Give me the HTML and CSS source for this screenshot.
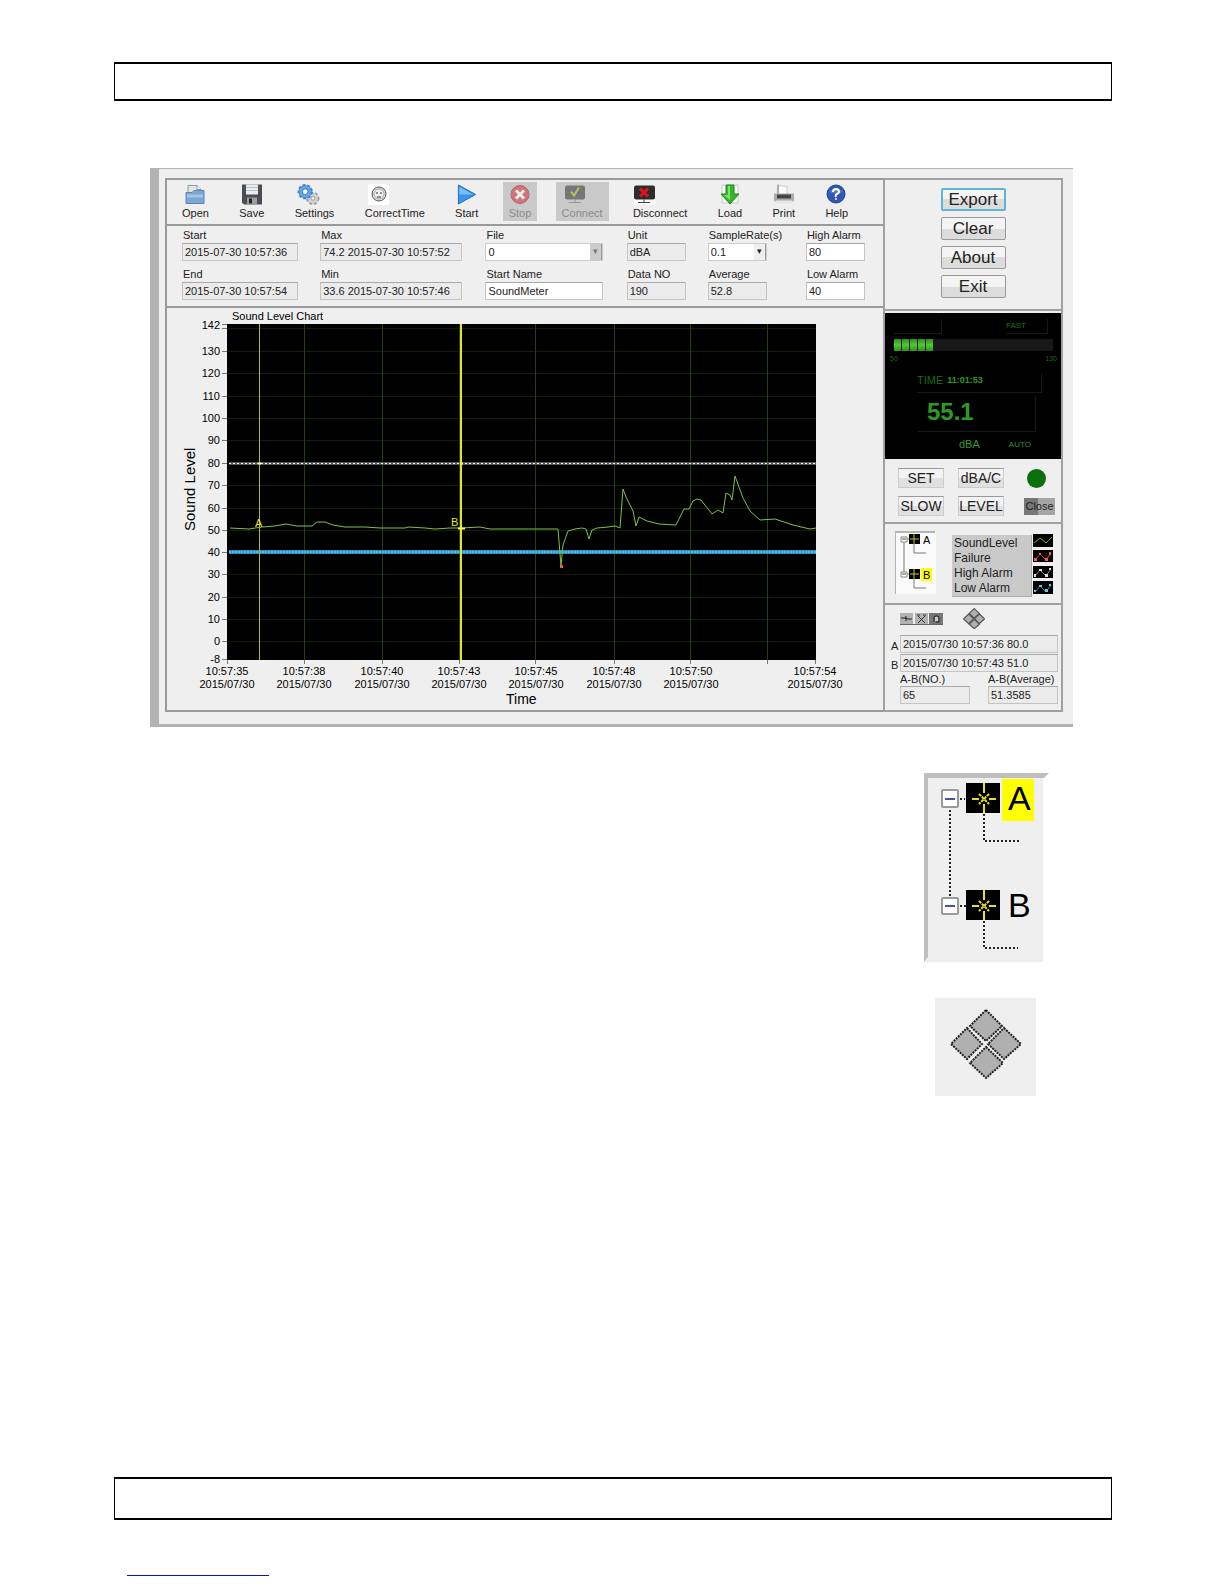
FILE: index.html
```
<!DOCTYPE html>
<html lang="en">
<head>
    <meta charset="UTF-8">
    <title>Sound Level Meter</title>
    <link rel="stylesheet" href="styles.css">
</head>
<body>

    <header class="page-bar"></header>

    <main>
        <section class="app">
            <div class="left">
                <nav class="panel toolbar">
                    <button type="button" class="tool">
                        <svg width="20" height="20" viewBox="0 0 20 20"><path d="M3 1h9l4 4v9H3z" fill="#dfe6ea" stroke="#8b9aa3"/><path d="M12 1v4h4" fill="#fff" stroke="#8b9aa3"/><path d="M1 8h6l2-2h10v13H1z" fill="#7ba7d6" stroke="#5f86b0"/><path d="M2 10h16v3H2z" fill="#a5c5e6"/></svg>
                        Open
                    </button>
                    <button type="button" class="tool">
                        <svg width="20" height="20" viewBox="0 0 20 20"><path d="M0 0h20v20H2l-2-2z" fill="#4a4d52"/><path d="M4 0h12v10H4z" fill="#e8ecef"/><path d="M4 3h12M4 6h12" stroke="#b8bec4"/><path d="M5 13h10v7H5z" fill="#9a9da2"/><path d="M7 14h3v5H7z" fill="#222"/></svg>
                        Save
                    </button>
                    <button type="button" class="tool tool-settings">
                        <svg width="24" height="22" viewBox="0 0 24 22"><circle cx="16" cy="15" r="6" fill="#c9ccce" stroke="#9b9ea0" stroke-width="2" stroke-dasharray="3 2"/><circle cx="16" cy="15" r="5" fill="#d0d2d3"/><circle cx="16" cy="15" r="2" fill="#efefef" stroke="#999"/><circle cx="8" cy="8" r="7" fill="#4b93da" stroke="#3d7fc4" stroke-width="2" stroke-dasharray="3 2"/><circle cx="8" cy="8" r="6" fill="#62a8ea"/><circle cx="8" cy="8" r="3" fill="#fff" stroke="#2d6db5"/></svg>
                        Settings
                    </button>
                    <button type="button" class="tool tool-time">
                        <svg width="21" height="21" viewBox="0 0 21 21"><path d="M0 0h21v21H0z" fill="#fff"/><circle cx="11" cy="10" r="7" fill="#ddd" stroke="#555"/><circle cx="11" cy="10" r="5" fill="#eee" stroke="#aaa"/><path d="M8 9h2M12 9h2M9 13h4" stroke="#333"/></svg>
                        CorrectTime
                    </button>
                    <button type="button" class="tool">
                        <svg width="20" height="22" viewBox="0 0 20 22"><path d="M1 1l18 10L1 21z" fill="#3b96f3" stroke="#2565b5"/><path d="M2 3l14 8H2z" fill="#79bdf9"/></svg>
                        Start
                    </button>
                    <button type="button" class="tool" disabled>
                        <svg width="20" height="20" viewBox="0 0 20 20"><circle cx="10" cy="10" r="9" fill="#cf7478" stroke="#b9666b"/><path d="M6 6l8 8M14 6l-8 8" stroke="#eee" stroke-width="3"/></svg>
                        Stop
                    </button>
                    <button type="button" class="tool tool-connect" disabled>
                        <svg width="20" height="20" viewBox="0 0 20 20"><rect y="1" width="20" height="14" rx="2" fill="#777"/><path d="M6 7l3 4 5-8" fill="none" stroke="#b6c552" stroke-width="2"/><path d="M10 15v3M4 18h12" stroke="#999"/></svg>
                        Connect
                    </button>
                    <button type="button" class="tool tool-disconnect">
                        <svg width="22" height="20" viewBox="0 0 22 20"><path d="M1 13h21v7H1z" fill="#fafafa"/><rect x="1" y="1" width="21" height="14" rx="2" fill="#2d2d2d"/><path d="M7 4l8 8M15 4l-8 8" stroke="#e31319" stroke-width="3"/><path d="M11 15v3M5 18h12" stroke="#444"/></svg>
                        Disconnect
                    </button>
                    <button type="button" class="tool">
                        <svg width="20" height="21" viewBox="0 0 20 21"><path d="M2 1h16v18H2z" fill="#f7f7f7" stroke="#ccc"/><path d="M6 1h8v9h5l-9 10-9-10h5z" fill="#35b52e" stroke="#23851f"/><path d="M8 2h2v14l-6-5h4z" fill="#7ee070"/></svg>
                        Load
                    </button>
                    <button type="button" class="tool">
                        <svg width="20" height="20" viewBox="0 0 20 20"><path d="M4 1l9 1v8H4z" fill="#fafafa" stroke="#ccc"/><path d="M4 0v9" stroke="#777"/><rect y="9" width="20" height="8" rx="1" fill="#aaa"/><path d="M3 10h14v4H3z" fill="#444"/><path d="M1 16h18l-2 3H3z" fill="#e6e6e6"/></svg>
                        Print
                    </button>
                    <button type="button" class="tool">
                        <svg width="21" height="21" viewBox="0 0 21 21"><circle cx="10" cy="10" r="9" fill="#2f55b7" stroke="#213f92"/><path d="M3 8a8 7 0 0 1 14 0q-7 3-14 0" fill="#5478cf"/><path d="M7 8q0-3 3-3t3 3q0 1-2 2t-1 3" fill="none" stroke="#fff" stroke-width="2"/><circle cx="10" cy="15" r="1" fill="#fff"/></svg>
                        Help
                    </button>
                </nav>

                <form class="panel info">
                    <div class="field"><label for="start">Start</label><input id="start" class="w-date" value="2015-07-30 10:57:36" readonly></div>
                    <div class="field"><label for="max">Max</label><input id="max" class="w-peak" value="74.2 2015-07-30 10:57:52" readonly></div>
                    <div class="field">
                        <label for="file">File</label>
                        <span class="combo combo-off w-file"><select id="file"><option>0</option></select></span>
                    </div>
                    <div class="field"><label for="unit">Unit</label><input id="unit" class="w-num" value="dBA" readonly></div>
                    <div class="field">
                        <label for="rate">SampleRate(s)</label>
                        <span class="combo w-num"><select id="rate"><option>0.1</option></select></span>
                    </div>
                    <div class="field"><label for="high">High Alarm</label><input id="high" class="w-num" value="80"></div>

                    <div class="field"><label for="end">End</label><input id="end" class="w-date" value="2015-07-30 10:57:54" readonly></div>
                    <div class="field"><label for="min">Min</label><input id="min" class="w-peak" value="33.6 2015-07-30 10:57:46" readonly></div>
                    <div class="field"><label for="name">Start Name</label><input id="name" class="w-file" value="SoundMeter"></div>
                    <div class="field"><label for="count">Data NO</label><input id="count" class="w-num" value="190" readonly></div>
                    <div class="field"><label for="average">Average</label><input id="average" class="w-num" value="52.8" readonly></div>
                    <div class="field"><label for="low">Low Alarm</label><input id="low" class="w-num" value="40"></div>
                </form>

                <div class="panel chart">
                    <svg viewBox="167 307 716 403">
                        <text x="232" y="320">Sound Level Chart</text>
                        <rect x="227" y="324" width="589" height="336" fill="#000"/>

                        <!-- grid -->
                        <path class="grid-h" d="M227 328.5h589M227 351.5h589M227 373.5h589M227 396.5h589M227 418.5h589M227 440.5h589M227 485.5h589M227 508.5h589M227 530.5h589M227 574.5h589M227 597.5h589M227 619.5h589M227 641.5h589"/>
                        <path class="grid-v" d="M304.5 324v336M382.5 324v336M459.5 324v336M535.5 324v336M614.5 324v336M690.5 324v336M767.5 324v336"/>
                        <path class="ticks" d="M222 324.5h5M222 328.5h5M222 351.5h5M222 373.5h5M222 396.5h5M222 418.5h5M222 440.5h5M222 463.5h5M222 485.5h5M222 508.5h5M222 530.5h5M222 552.5h5M222 574.5h5M222 597.5h5M222 619.5h5M222 641.5h5M222 659.5h5M227.5 660v4M304.5 660v4M382.5 660v4M459.5 660v4M535.5 660v4M614.5 660v4M690.5 660v4M767.5 660v4M815.5 660v4"/>

                        <!-- alarms -->
                        <path d="M229 463.5h587" stroke="#55555c" stroke-width="3"/>
                        <path d="M229 463.5h587" stroke="#f0f0f8" stroke-dasharray="2 2"/>
                        <path d="M229 552h587" stroke="#2b8fc4" stroke-width="4"/>
                        <path d="M229 552h587" stroke="#5bb6e2" stroke-width="2" stroke-dasharray="2 1"/>

                        <!-- level -->
                        <polyline class="level" points="230,528 249,529 262,527 275,526 286,524 297,526 312,526 317,522 325,522 333,525 345,527 365,527 380,528 405,528 408,527 425,528 435,529 450,528 461,528 480,527 490,529 520,529 558,529 561,566 563,545 568,531 575,529 582,528 586,529 589,539 592,530 597,528 608,527 615,526 620,528 623,489 626,497 633,511 636,526 639,517 647,521 659,524 676,525 684,509 689,509 693,501 697,499 701,500 712,514 718,510 723,513 726,493 730,495 732,500 735,476 743,498 750,511 760,520 775,519 793,525 810,529 816,528"/>
                        <rect x="560" y="565" width="3" height="3" fill="#f05a50"/>

                        <!-- cursors -->
                        <path d="M259.5 324v336" stroke="#b5b82a"/>
                        <path d="M461 324v336" stroke="#e6e32e" stroke-width="2"/>
                        <path d="M258 463.5h3M460 463.5h3M458 528.5h7" stroke="#ffff30" stroke-width="2"/>
                        <text class="mark" x="255" y="527">A</text>
                        <text class="mark" x="451" y="526">B</text>

                        <g text-anchor="end">
                            <text x="220" y="329">142</text>
                            <text x="220" y="355">130</text>
                            <text x="220" y="377">120</text>
                            <text x="220" y="400">110</text>
                            <text x="220" y="422">100</text>
                            <text x="220" y="444">90</text>
                            <text x="220" y="467">80</text>
                            <text x="220" y="489">70</text>
                            <text x="220" y="512">60</text>
                            <text x="220" y="534">50</text>
                            <text x="220" y="556">40</text>
                            <text x="220" y="578">30</text>
                            <text x="220" y="601">20</text>
                            <text x="220" y="623">10</text>
                            <text x="220" y="645">0</text>
                            <text x="220" y="663">-8</text>
                        </g>
                        <g text-anchor="middle">
                            <text x="227" y="675">10:57:35</text><text x="227" y="688">2015/07/30</text>
                            <text x="304" y="675">10:57:38</text><text x="304" y="688">2015/07/30</text>
                            <text x="382" y="675">10:57:40</text><text x="382" y="688">2015/07/30</text>
                            <text x="459" y="675">10:57:43</text><text x="459" y="688">2015/07/30</text>
                            <text x="536" y="675">10:57:45</text><text x="536" y="688">2015/07/30</text>
                            <text x="614" y="675">10:57:48</text><text x="614" y="688">2015/07/30</text>
                            <text x="691" y="675">10:57:50</text><text x="691" y="688">2015/07/30</text>
                            <text x="815" y="675">10:57:54</text><text x="815" y="688">2015/07/30</text>
                        </g>
                        <text class="axis-x" x="506" y="704">Time</text>
                        <text class="axis-y" transform="translate(195 531) rotate(-90)">Sound Level</text>
                    </svg>
                </div>
            </div>

            <aside class="right">
                <div class="panel actions">
                    <button type="button" class="btn focus">Export</button>
                    <button type="button" class="btn">Clear</button>
                    <button type="button" class="btn">About</button>
                    <button type="button" class="btn">Exit</button>
                </div>

                <div class="panel meter">
                    <div class="lcd">
                        <div class="lcd-top"><span></span><span>FAST</span></div>
                        <div class="lcd-bar"><i></i><i></i><i></i><i></i><i></i></div>
                        <div class="lcd-scale"><span>50</span><span>130</span></div>
                        <div class="lcd-time"><span>TIME</span><b>11:01:53</b></div>
                        <div class="lcd-value">55.1</div>
                        <div class="lcd-unit"><span>dBA</span><small>AUTO</small></div>
                    </div>
                    <div class="keys">
                        <button type="button" class="key">SET</button>
                        <button type="button" class="key">dBA/C</button>
                        <span class="led"></span>
                        <button type="button" class="key">SLOW</button>
                        <button type="button" class="key">LEVEL</button>
                        <button type="button" class="close">Close</button>
                    </div>
                </div>

                <div class="panel legend">
                    <svg class="minitree" width="41" height="63" viewBox="0 0 41 63">
                        <path d="M0 0h41v63H0z" fill="#fafafa"/>
                        <path d="M0 63V1h40" fill="none" stroke="#b5b5b5" stroke-width="2"/>
                        <path d="M9 9v34M9 8h6M9 43h6" stroke="#777"/>
                        <path d="M6 6h6v5H6zM6 41h6v5H6z" fill="#fff" stroke="#888"/>
                        <path d="M7 8h4M7 43h4" stroke="#555"/>
                        <path d="M14 3h11v10H14zM14 38h11v10H14z"/>
                        <path d="M19 3v10M15 8h9M19 38v10M15 43h9" stroke="#c9c920"/>
                        <path d="M19 13v9h12M19 48v9h12" fill="none" stroke="#777"/>
                        <path d="M26 37h11v13H26z" fill="#ff0"/>
                        <text x="28" y="13">A</text>
                        <text x="28" y="48">B</text>
                    </svg>
                    <ul class="names">
                        <li>SoundLevel</li>
                        <li>Failure</li>
                        <li>High Alarm</li>
                        <li>Low Alarm</li>
                    </ul>
                    <svg class="swatches" width="20" height="60" viewBox="0 0 20 60" fill="none">
                        <path d="M0 0h20v13H0zM0 16h20v12H0zM0 32h20v12H0zM0 47h20v13H0z" fill="#000"/>
                        <path d="M1 9l6-5 6 5 6-6" stroke="#6cb52f"/>
                        <path d="M2 26l5-6 6 6 5-7" stroke="#e33"/>
                        <path d="M1 24h3v3H1zM6 19h2v2H6zM12 24h3v3h-3zM16 18h2v3h-2z" fill="#f55"/>
                        <path d="M2 42l5-6 6 6 5-7" stroke="#888"/>
                        <path d="M1 40h2v3H1zM6 35h3v2H6zM12 40h3v3h-3zM16 34h2v2h-2z" fill="#ddd"/>
                        <path d="M2 58l5-6 6 6 5-7" stroke="#2a84b5"/>
                        <path d="M1 56h2v2H1zM6 51h3v2H6zM12 55h3v3h-3zM16 50h2v2h-2z" fill="#6bc4ee"/>
                    </svg>
                </div>

                <div class="panel cursors">
                    <div class="cursor-tools">
                        <svg width="43" height="12" viewBox="0 0 43 12" fill="none">
                            <path d="M0 0h13v12H0zM15 0h13v12H15z" fill="#b2b2b2"/>
                            <path d="M29 0h14v12H29z" fill="#777"/>
                            <path d="M0 11.5h43" stroke="#666"/>
                            <path d="M1 5h4l3 1h4M6 3v5" stroke="#222"/>
                            <path d="M18 3l7 7M25 3l-7 7M17 2h3M23 2h3" stroke="#333"/>
                            <path d="M34 9V4q2-3 5 0v5h-3" stroke="#222"/>
                            <path d="M35 4h3v4h-3z" fill="#ccc"/>
                        </svg>
                        <svg width="22" height="21" viewBox="0 0 72 70"><g class="tiles"><path d="M37 2L54 18 37 34 20 18z"/><path d="M18 20L35 36 18 52 1 36z"/><path d="M54 20L71 36 54 52 37 36z"/><path d="M37 38L54 54 37 69 20 54z"/></g></svg>
                    </div>
                    <div class="cursor-row"><label for="ca">A</label><input id="ca" value="2015/07/30 10:57:36 80.0" readonly></div>
                    <div class="cursor-row"><label for="cb">B</label><input id="cb" value="2015/07/30 10:57:43 51.0" readonly></div>
                    <div class="cursor-diff">
                        <div><label for="abno">A-B(NO.)</label><input id="abno" value="65" readonly></div>
                        <div><label for="abavg">A-B(Average)</label><input id="abavg" value="51.3585" readonly></div>
                    </div>
                </div>
            </aside>
        </section>

        <section class="figures">
            <svg width="126" height="189" viewBox="924 772 126 189">
                <path d="M924 772h119v189H924z" fill="#efefef"/>
                <path d="M924 772h125l-5 5H928v179l-4 5z" fill="#bfbfbf"/>
                <path class="dots" d="M950 809v87M960 798h5M960 905h6M984 813v27h36M984 920v27h34"/>
                <g fill="#fff" stroke="#999" stroke-width="2">
                    <rect x="942" y="789" width="16" height="17" rx="1"/>
                    <rect x="942" y="897" width="16" height="16" rx="1"/>
                </g>
                <path d="M945 798h10M945 905h10" stroke="#4355a8" stroke-width="2"/>
                <path d="M966 782h34v30h-34zM966 889h34v30h-34z"/>
                <g id="cross" fill="none" stroke="#e8e020" stroke-width="2">
                    <path d="M984 782v10M984 803v9M972 798h7M989 798h7"/>
                    <path d="M979 793l10 10M989 793l-10 10" stroke-dasharray="3 1"/>
                </g>
                <use href="#cross" y="107"/>
                <path d="M1002 778h32v42h-32z" fill="#ff0"/>
                <text x="1008" y="809">A</text>
                <text x="1008" y="916">B</text>
            </svg>
            <div class="tile-box">
                <svg width="74" height="72" viewBox="0 0 74 72"><g class="tiles tiles-big"><path d="M37 2L53 18 37 33 21 18z"/><path d="M18 20L33 36 18 51 2 36z"/><path d="M55 20L72 36 55 51 39 36z"/><path d="M37 39L54 55 37 70 21 55z"/></g></svg>
            </div>
        </section>
    </main>

    <footer>
        <div class="page-bar page-bar-bottom"></div>
        <a class="link" href="#" aria-label="Website"></a>
    </footer>

</body>
</html>
```
FILE: styles.css
```
* {
    box-sizing: border-box;
}
body {
    display: flex;
    flex-direction: column;
    min-height: 100vh;
    margin: 0;
    padding: 62px 112px 8px 114px;
    background-color: #fff;
    color: #222;
    font-family: "Liberation Sans", Arial, sans-serif;
    font-size: 11px;
}
button, input, select {
    font-family: inherit;
    font-size: 11px;
    color: inherit;
}
svg {
    display: block;
}
.page-bar {
    height: 39px;
    border: 1px solid #000;
    border-width: 2px 1px;
}
.page-bar-bottom {
    height: 43px;
}
footer {
    margin-top: auto;
}
.link {
    display: block;
    width: 142px;
    margin: 55px 0 0 13px;
    border-bottom: 1px solid #1414a0;
}

/* application window */
.app {
    display: flex;
    margin: 67px 39px 0 36px;
    padding: 9px 10px 12px 6px;
    background-color: #efefef;
    border: solid #b3b3b3;
    border-width: 1px 0 3px 9px;
}
.left {
    flex: 1;
    min-width: 0;
    display: flex;
    flex-direction: column;
}
.right {
    width: 180px;
    display: flex;
    flex-direction: column;
}
.left .panel {
    border: solid #9a9a9a;
    border-width: 2px 0 0 2px;
}
.right .panel {
    border: solid #a0a0a0;
    border-width: 2px 2px 0;
}

.toolbar {
    display: flex;
    justify-content: space-between;
    height: 46px;
    padding: 2px 29px 3px 9px;
}
.tool {
    display: flex;
    flex-direction: column;
    align-items: center;
    justify-content: space-between;
    padding: 2px 6px;
    border: none;
    background: none;
    line-height: 12px;
}
.tool:disabled {
    background-color: #c9c9c9;
    color: #8c8c8c;
}
.tool svg {
    height: 21px;
}
.tool-settings svg {
    margin-right: 12px;
}
.tool-time svg {
    margin-right: 32px;
}
.tool-connect svg {
    margin-right: 14px;
}
.tool-disconnect {
    align-items: flex-start;
}

.info {
    display: grid;
    grid-template-columns: 138fr 165fr 141fr 81fr 98fr 77fr;
    row-gap: 4px;
    padding: 2px 0 5px 15px;
    height: 82px;
}
.field label {
    display: block;
    line-height: 15px;
    padding-left: 1px;
}
input {
    display: block;
    height: 18px;
    padding: 0 2px;
    border: 1px solid #c4c4c4;
    border-top-color: #a8a8a8;
    background-color: #fff;
}
input[readonly] {
    background-color: #ebebeb;
}
.w-date {
    width: 116px;
}
.w-peak {
    width: 142px;
}
.w-file {
    width: 118px;
}
.w-num {
    width: 59px;
}
.combo {
    display: block;
    position: relative;
}
.combo select {
    display: block;
    width: 100%;
    height: 18px;
    padding: 0 2px;
    border: 1px solid #ccc;
    border-radius: 0;
    background-color: #fff;
    appearance: none;
}
.combo::after {
    content: "\25BE";
    position: absolute;
    top: 1px;
    right: 1px;
    width: 11px;
    height: 16px;
    line-height: 15px;
    font-size: 9px;
    text-align: center;
    background-color: #eee;
    border-right: 1px solid #999;
    pointer-events: none;
}
.combo-off::after {
    background-color: #ccc;
    color: #777;
}

.chart {
    flex: 1;
}
.left .chart {
    border-bottom-width: 2px;
}
.chart svg {
    width: 100%;
    margin-top: -1px;
}
.grid-h {
    stroke: #141f08;
}
.grid-v {
    stroke: #24400f;
}
.ticks {
    stroke: #777;
}
.level {
    fill: none;
    stroke: #7cc442;
}
.chart .mark {
    fill: #e6e32e;
}
.axis-x {
    font-size: 14px;
}
.axis-y {
    font-size: 15px;
}

/* right column */
.actions {
    display: flex;
    flex-direction: column;
    align-items: center;
    gap: 6px;
    height: 131px;
    padding-top: 8px;
}
.btn {
    width: 65px;
    height: 23px;
    padding: 0;
    border: 1px solid #999;
    border-radius: 2px;
    background: linear-gradient(#f4f4f4 50%, #dcdcdc 50%);
    font-size: 17px;
    line-height: 20px;
}
.btn.focus {
    border: 2px solid #5fb3d3;
    line-height: 18px;
}
.meter {
    height: 213px;
    padding-top: 2px;
}
.lcd {
    height: 146px;
    padding: 6px 8px 6px 9px;
    background-color: #000;
    color: #2f9a22;
}
.lcd-top {
    display: flex;
    justify-content: space-between;
    font-size: 8px;
    line-height: 14px;
    color: #1f7018;
}
.lcd-top span {
    width: 48px;
    height: 15px;
    border: solid #181818;
    border-width: 0 1px 1px 0;
}
.lcd-top span + span {
    width: 42px;
    margin-right: 5px;
}
.lcd-bar {
    display: flex;
    gap: 1px;
    height: 12px;
    margin-top: 5px;
    background-color: #191919;
}
.lcd-bar i {
    width: 7px;
    background: linear-gradient(#2f8f1c, #52c832, #2f8f1c);
}
.lcd-scale {
    display: flex;
    justify-content: space-between;
    margin: 4px -4px 0;
    font-size: 7px;
    line-height: 8px;
    color: #1f6a18;
}
.lcd-time {
    display: flex;
    gap: 4px;
    width: 125px;
    height: 20px;
    margin: 10px 0 0 23px;
    line-height: 14px;
    color: #1f6a18;
    border: solid #181818;
    border-width: 0 1px 1px 0;
}
.lcd-time b {
    font-size: 9px;
    color: #2f9a22;
}
.lcd-value {
    width: 118px;
    height: 36px;
    margin: 3px 0 0 24px;
    padding-left: 9px;
    font-size: 24px;
    font-weight: bold;
    line-height: 32px;
    border: solid #181818;
    border-width: 0 1px 1px 0;
}
.lcd-unit {
    display: flex;
    align-items: center;
    gap: 29px;
    margin-left: 65px;
    height: 24px;
}
.lcd-unit small {
    font-size: 8px;
}
.keys {
    display: grid;
    grid-template-columns: 46px 46px 31px;
    gap: 8px 14px;
    align-items: center;
    padding: 9px 0 0 13px;
}
.key {
    height: 20px;
    padding: 0;
    border: 1px solid #ccc;
    border-top-color: #999;
    background: linear-gradient(#f3f3f3 50%, #e0e0e0 50%);
    font-size: 14px;
    line-height: 16px;
    white-space: nowrap;
}
.led {
    width: 19px;
    height: 19px;
    margin-left: 9px;
    border-radius: 50%;
    background-color: #0b700b;
}
.close {
    width: 31px;
    height: 17px;
    margin-left: 6px;
    padding: 0;
    border: none;
    background: linear-gradient(90deg, #777 45%, #a5a5a5 45%);
}
.legend {
    display: flex;
    align-items: flex-start;
    height: 81px;
    padding: 7px 0 0 10px;
}
.minitree {
    font-size: 11px;
}
.names {
    width: 80px;
    margin: 4px 0 0 16px;
    padding: 1px 2px 0;
    background-color: #c9c9c9;
    border: solid #aaa;
    border-width: 0 1px 1px 0;
    list-style: none;
    font-size: 12px;
    line-height: 15px;
}
.swatches {
    margin: 3px 0 0 1px;
}
.cursors {
    flex: 1;
    padding: 8px 3px 4px 6px;
}
.right .cursors {
    border-bottom-width: 2px;
}
.cursor-tools {
    display: flex;
    align-items: center;
    gap: 20px;
    margin: -5px 0 6px 9px;
}
.cursor-row {
    display: flex;
    align-items: center;
    margin-bottom: 1px;
}
.cursor-row label {
    width: 9px;
    padding-top: 4px;
}
.cursor-row input {
    flex: 1;
    min-width: 0;
}
.cursor-diff {
    display: grid;
    grid-template-columns: 88px 69px;
    margin-left: 9px;
}
.cursor-diff label {
    display: block;
    margin-right: -8px;
    line-height: 13px;
}
.cursor-diff input {
    width: 70px;
}
.tiles {
    fill: #b0b0b0;
    stroke: #555;
    stroke-width: 4px;
}
.tiles-big {
    stroke: #222;
    stroke-width: 2px;
    stroke-dasharray: 2 1;
}

/* enlarged details */
.figures {
    display: flex;
    flex-direction: column;
    align-items: flex-start;
    gap: 36px;
    width: 126px;
    margin: 46px 62px 0 auto;
    font-size: 34px;
}
.dots {
    fill: none;
    stroke: #222;
    stroke-width: 2px;
    stroke-dasharray: 2 2;
}
.tile-box {
    margin-left: 11px;
    padding: 10px 13px 16px 14px;
    background-color: #efefef;
}
```
